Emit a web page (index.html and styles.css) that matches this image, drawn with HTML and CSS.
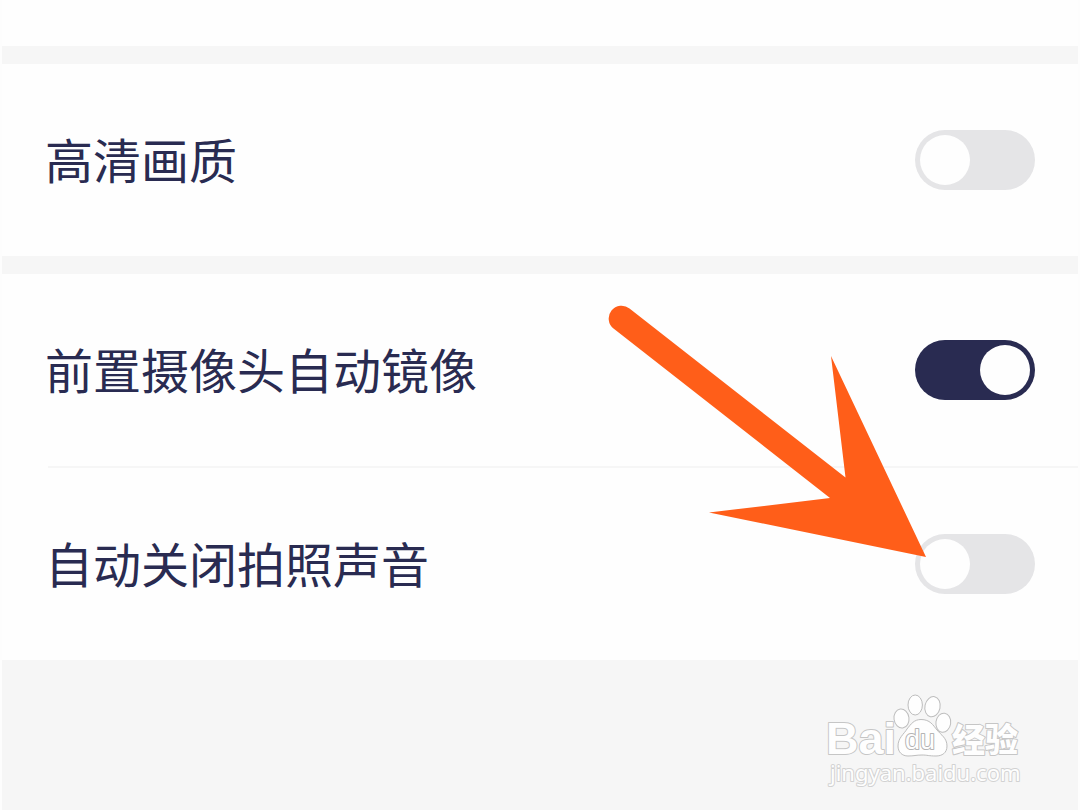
FILE: index.html
```html
<!DOCTYPE html>
<html lang="zh-CN">
<head>
<meta charset="utf-8">
<meta name="viewport" content="width=device-width, initial-scale=1">
<title>相机设置</title>
<link rel="stylesheet" href="styles.css">
</head>
<body>
<main class="settings">
  <div class="group group-top"></div>
  <section class="group">
    <div class="row">
      <label class="label" for="hd">高清画质</label>
      <input class="switch" type="checkbox" role="switch" id="hd">
    </div>
  </section>
  <section class="group group-camera">
    <div class="row">
      <label class="label" for="mirror">前置摄像头自动镜像</label>
      <input class="switch" type="checkbox" role="switch" id="mirror" checked>
    </div>
    <div class="divider"></div>
    <div class="row">
      <label class="label" for="mute">自动关闭拍照声音</label>
      <input class="switch" type="checkbox" role="switch" id="mute">
    </div>
    <svg class="arrow" viewBox="0 0 318 253" width="318" height="253" aria-hidden="true">
      <path d="M21.500 3.500 237.500 172.500 223 51 318 252 101 207.500 222 193 5.500 23.500A12.600 12.600 0 1 1 21.500 3.500Z"/>
    </svg>
  </section>
</main>
<svg class="watermark" viewBox="0 0 204 98" width="204" height="98" role="img" aria-label="Baidu 经验">
  <text class="brand" x="0" y="62">Bai</text>
  <g class="paw">
    <ellipse cx="75.500" cy="26.500" rx="7.500" ry="9.500" transform="rotate(-8 75.500 26.500)"/>
    <ellipse cx="89.200" cy="13" rx="7.200" ry="10"/>
    <ellipse cx="106.500" cy="14.700" rx="7.600" ry="10.200" transform="rotate(12 106.500 14.700)"/>
    <ellipse cx="117.300" cy="30.700" rx="7.400" ry="9.600" transform="rotate(8 117.300 30.700)"/>
    <path d="M95 27.500C104 27.500 107 33 111 38C115 43 121 46 121 54C121 61 116 64 110 64C103 64 101 63 96 63C90 63 88 64 82 64C76 64 72 60 72 54C72 46 78 42 81 37C85 32 88 27.500 95 27.500Z"/>
  </g>
  <text class="du" x="79" y="57">du</text>
  <text class="product" x="126" y="60">经验</text>
  <text class="address" x="4" y="89">jingyan.baidu.com</text>
</svg>
</body>
</html>
```
FILE: styles.css
```css
* {
  box-sizing: border-box;
}

body {
  position: relative;
  min-height: 100vh;
  margin: 0;
  background: #f6f6f6;
  border-left: 2px solid #fdfdfd;
  border-right: 2px solid #fdfdfd;
  color: #292b51;
  font-family: "Noto Sans CJK SC", sans-serif;
}

.settings {
  display: flex;
  flex-direction: column;
  gap: 18px;
}

.group {
  background: #fefefe;
}

.group-top {
  height: 46px;
}

.group-camera {
  position: relative;
}

.row {
  display: flex;
  align-items: center;
  justify-content: space-between;
  gap: 24px;
  min-height: 192px;
  padding: 0 43px;
}

.label {
  padding-bottom: 4px;
  font-size: 48px;
  line-height: 72px;
}

.divider {
  height: 2px;
  margin-left: 46px;
  background: #f6f6f6;
}

.switch {
  appearance: none;
  flex: none;
  display: flex;
  width: 120px;
  height: 60px;
  margin: 0;
  padding: 5px;
  border-radius: 30px;
  background: #e5e5e7;
  cursor: pointer;
}

.switch::before {
  content: "";
  width: 50px;
  height: 50px;
  border-radius: 50%;
  background: #fefefe;
}

.switch:checked {
  justify-content: flex-end;
  background: #292b51;
}

.arrow {
  position: absolute;
  top: 31px;
  right: 152px;
  overflow: visible;
  fill: #ff5e19;
  pointer-events: none;
}

.watermark {
  position: absolute;
  right: 48px;
  bottom: 20px;
  fill: #fefefe;
  stroke: #c6c6c6;
  stroke-width: 2px;
  stroke-linejoin: round;
}

.watermark text {
  paint-order: stroke;
}

.watermark .paw {
  stroke: #bdbdbd;
  stroke-width: 1px;
}

.brand {
  font: bold 45px "Liberation Sans", sans-serif;
}

.watermark .du {
  font: 27px "Liberation Sans", sans-serif;
  stroke: #b4b4b4;
}

.product {
  font: 900 33px "Noto Sans CJK SC", sans-serif;
}

.address {
  font: 22px "Noto Sans", sans-serif;
  stroke: #d2d2d2;
}
```
